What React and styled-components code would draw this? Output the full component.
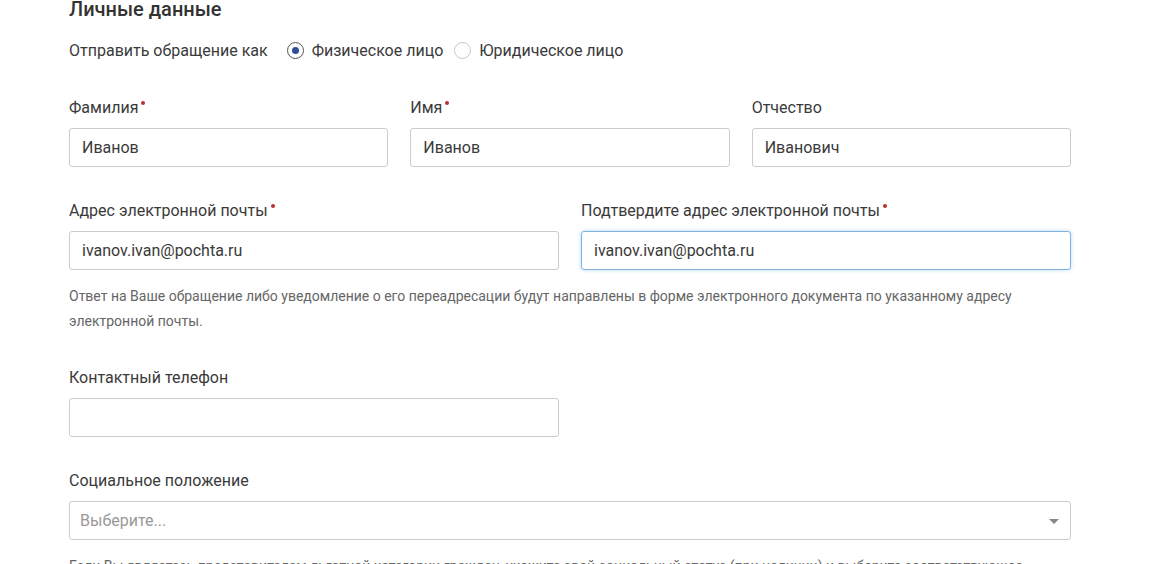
import React from 'react';
import styled, { createGlobalStyle } from 'styled-components';

const GlobalStyle = createGlobalStyle`
  body {
    margin: 0;
    background: #fff;
    font-family: Roboto, "Liberation Sans", Arial, sans-serif;
    color: #333;
  }
`;

const Page = styled.div`
  width: 1002px;
  padding-left: 69px;
`;

const Heading = styled.h2`
  margin: 0;
  font-size: 20px;
  line-height: 18px;
  font-weight: 500;
  color: #333;
`;

const SendAs = styled.div`
  display: flex;
  align-items: center;
  height: 20px;
  margin-top: 22px;
  font-size: 16px;
  color: #3a3a3a;
`;

const SendAsLabel = styled.span`
  margin-right: 19px;
`;

const RadioOption = styled.label`
  display: flex;
  align-items: center;
  gap: 8px;
  margin-right: 11px;
  cursor: pointer;
`;

const RadioCircle = styled.span`
  box-sizing: border-box;
  width: 17px;
  height: 17px;
  border-radius: 50%;
  border: 1px solid ${p => (p.checked ? '#555' : '#c8c8c8')};
  display: flex;
  align-items: center;
  justify-content: center;

  &::after {
    content: '';
    width: 7px;
    height: 7px;
    border-radius: 50%;
    background: ${p => (p.checked ? '#2d4f96' : 'transparent')};
  }
`;

const Row = styled.div`
  display: grid;
  grid-template-columns: repeat(${p => p.cols}, 1fr);
  column-gap: 22px;
  margin-top: ${p => p.top}px;
`;

const Field = styled.div`
  display: flex;
  flex-direction: column;
`;

const Label = styled.label`
  font-size: 16px;
  line-height: 20px;
  color: #3a3a3a;
  margin-bottom: 10px;
`;

const Required = styled.span`
  position: relative;
  top: -8px;
  margin-left: 3px;
  display: inline-block;
  width: 4px;
  height: 4px;
  border-radius: 50%;
  background: #b5332a;
`;

const Input = styled.input`
  box-sizing: border-box;
  height: 39px;
  width: 100%;
  padding: 0 12px;
  border: 1px solid ${p => (p.focused ? '#7fb4e0' : '#ccc')};
  border-radius: 3px;
  box-shadow: ${p => (p.focused ? '0 0 4px rgba(102, 175, 233, 0.45)' : 'none')};
  font-family: inherit;
  font-size: 16px;
  color: #3a3a3a;
  background: #fff;
  outline: none;
`;

const Hint = styled.p`
  margin: 14px 0 0;
  font-size: 14px;
  line-height: 25px;
  color: #666;
`;

const SelectBox = styled.div`
  box-sizing: border-box;
  height: 39px;
  display: flex;
  align-items: center;
  justify-content: space-between;
  padding: 0 11px 0 10px;
  border: 1px solid #ccc;
  border-radius: 3px;
  font-size: 16px;
  color: #999;
`;

const Caret = styled.span`
  width: 0;
  height: 0;
  border-left: 5px solid transparent;
  border-right: 5px solid transparent;
  border-top: 5px solid #888;
  margin-top: 2px;
`;

const Radio = ({ checked, children }) => (
  <RadioOption>
    <RadioCircle checked={checked} />
    {children}
  </RadioOption>
);

const TextField = ({ label, required, value, focused }) => (
  <Field>
    <Label>
      {label}
      {required && <Required />}
    </Label>
    <Input defaultValue={value} focused={focused} />
  </Field>
);

export default function App() {
  return (
    <>
      <GlobalStyle />
      <Page>
        <Heading>Личные данные</Heading>
        <SendAs>
          <SendAsLabel>Отправить обращение как</SendAsLabel>
          <Radio checked>Физическое лицо</Radio>
          <Radio>Юридическое лицо</Radio>
        </SendAs>

        <Row cols={3} top={38}>
          <TextField label="Фамилия" required value="Иванов" />
          <TextField label="Имя" required value="Иванов" />
          <TextField label="Отчество" value="Иванович" />
        </Row>

        <Row cols={2} top={34}>
          <TextField label="Адрес электронной почты" required value="ivanov.ivan@pochta.ru" />
          <TextField label="Подтвердите адрес электронной почты" required value="ivanov.ivan@pochta.ru" focused />
        </Row>
        <Hint>
          Ответ на Ваше обращение либо уведомление о его переадресации будут направлены в форме электронного документа по указанному адресу электронной почты.
        </Hint>

        <Row cols={2} top={34}>
          <TextField label="Контактный телефон" value="" />
        </Row>

        <Row cols={1} top={34}>
          <Field>
            <Label>Социальное положение</Label>
            <SelectBox>
              Выберите...
              <Caret />
            </SelectBox>
          </Field>
        </Row>
        <Hint>
          Если Вы являетесь представителем льготной категории граждан, укажите свой социальный статус (при наличии) и выберите соответствующее значение.
        </Hint>
      </Page>
    </>
  );
}
